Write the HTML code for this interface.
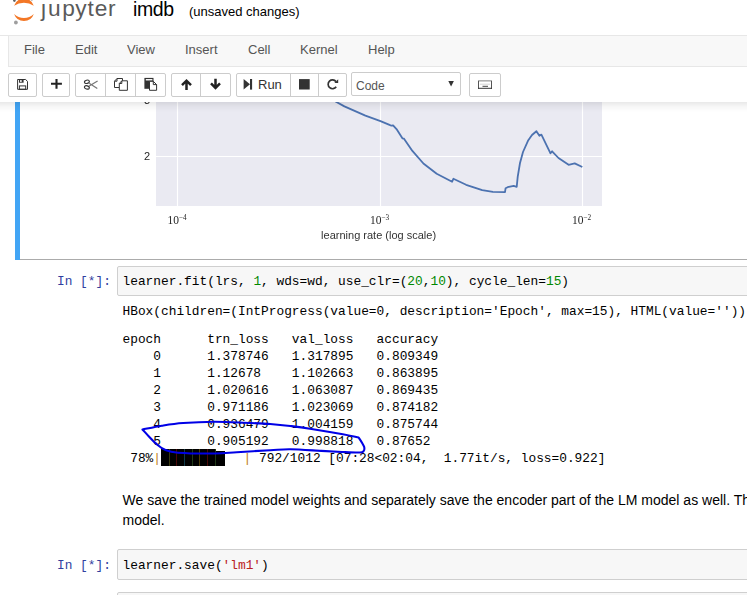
<!DOCTYPE html>
<html><head><meta charset="utf-8">
<style>
html,body{margin:0;padding:0;width:747px;height:595px;overflow:hidden;background:#fff;}
body{position:relative;font-family:"Liberation Sans",sans-serif;color:#000;}
.a{position:absolute;white-space:nowrap;}
.mono{font-family:"Liberation Mono",monospace;font-size:12.83px;}
#header{position:absolute;left:0;top:0;width:747px;height:102px;background:#fff;z-index:10;}
#shadow{position:absolute;left:0;top:102px;width:747px;height:10px;z-index:11;
  background:linear-gradient(to bottom,rgba(0,0,0,0.09),rgba(0,0,0,0.03) 50%,rgba(0,0,0,0));}
.menu{position:absolute;top:42px;font-size:13px;color:#555;line-height:15px;}
.btn{position:absolute;top:73px;height:22px;border:1px solid #ccc;border-radius:2px;background:#fff;box-sizing:content-box;}
.sep{position:absolute;top:73px;width:1px;height:24px;background:#ccc;}
.ico{position:absolute;}
.prompt{position:absolute;color:#303F9F;font-family:"Liberation Mono",monospace;font-size:12.83px;}
.inbox{position:absolute;left:117px;width:700px;background:#f7f7f7;border:1px solid #cfcfcf;border-radius:2px;}
.num{color:#080;}
.str{color:#BA2121;}
</style></head>
<body>
<div id="header">
  <!-- logo -->
  <svg class="ico" style="left:0;top:0" width="40" height="30" viewBox="0 0 40 30">
    <path d="M14.1 5.7A10.43 10.43 0 0 1 33.8 5.7A18.2 18.2 0 0 0 14.1 5.7Z" fill="#f37726"/>
    <path d="M14.1 14A10.43 10.43 0 0 0 33.8 14A14.4 14.4 0 0 1 14.1 14Z" fill="#f37726"/>
    <circle cx="15.9" cy="22.5" r="1.9" fill="#9e9e9e"/>
    <circle cx="14.4" cy="0.6" r="1.3" fill="#616262"/>
    <circle cx="31.8" cy="-0.2" r="1" fill="#9e9e9e"/>
  </svg>
  <div style="position:absolute;left:0;top:-5.3px;font-size:22.7px;line-height:26px;color:#5a5a5a;">
    <span class="a" style="left:41.1px">j</span><span class="a" style="left:48px">u</span><span class="a" style="left:62.2px">p</span><span class="a" style="left:75.2px">y</span><span class="a" style="left:87.6px">t</span><span class="a" style="left:94.8px">e</span><span class="a" style="left:107.9px">r</span>
  </div>
  <div style="position:absolute;left:39px;top:0;width:9px;height:3.2px;background:#fff"></div>
  <div class="a" style="left:133px;top:-1.8px;font-size:19.5px;line-height:22px;color:#000;letter-spacing:-0.4px">imdb</div>
  <div class="a" style="left:189px;top:3.5px;font-size:13px;line-height:15px;color:#000">(unsaved changes)</div>
  <!-- menubar -->
  <div style="position:absolute;left:0;top:35px;width:747px;height:1px;background:#e7e7e7"></div>
  <div style="position:absolute;left:8px;top:35px;width:760px;height:30px;background:#f8f8f8;border:1px solid #e7e7e7;"></div>
  <div class="menu" style="left:24px">File</div>
  <div class="menu" style="left:75px">Edit</div>
  <div class="menu" style="left:127px">View</div>
  <div class="menu" style="left:185px">Insert</div>
  <div class="menu" style="left:248px">Cell</div>
  <div class="menu" style="left:300px">Kernel</div>
  <div class="menu" style="left:368px">Help</div>
  <!-- toolbar -->
  <div class="btn" style="left:8px;width:27px"></div>
  <div class="btn" style="left:42px;width:26px"></div>
  <div class="btn" style="left:75px;width:89px"></div>
  <div class="sep" style="left:105px"></div><div class="sep" style="left:135px"></div>
  <div class="btn" style="left:171px;width:58px"></div>
  <div class="sep" style="left:200px"></div>
  <div class="btn" style="left:236px;width:109px"></div>
  <div class="sep" style="left:290px"></div><div class="sep" style="left:318px"></div>
  <div class="btn" style="left:351px;top:72px;width:108px;height:22px"></div>
  <div class="btn" style="left:469px;width:30px"></div>
  <div class="a" style="left:258px;top:77px;font-size:13px;line-height:15px;color:#333">Run</div>
  <div class="a" style="left:356px;top:79px;font-size:12px;line-height:14px;color:#555">Code</div>
  <svg class="ico" style="left:0;top:60px" width="520" height="40" viewBox="0 60 520 40">
    <!-- save -->
    <path d="M17.6 79.5h8l1.9 1.9v7.9h-9.9z" fill="none" stroke="#333" stroke-width="1"/>
    <rect x="19" y="79.5" width="4.6" height="3.2" fill="#333"/>
    <rect x="20.2" y="80" width="1.4" height="2" fill="#fff"/>
    <rect x="19.4" y="85.9" width="6.3" height="3.4" fill="none" stroke="#333" stroke-width="1"/>
    <!-- plus -->
    <path d="M56.5 79v9.7M51 83.7h10.9" stroke="#222" stroke-width="2.1"/>
    <!-- scissors -->
    <ellipse cx="86.9" cy="81.8" rx="2.5" ry="1.6" fill="none" stroke="#333" stroke-width="1.1" transform="rotate(-15 86.9 81.8)"/>
    <ellipse cx="86.9" cy="87.4" rx="2.5" ry="1.6" fill="none" stroke="#333" stroke-width="1.1" transform="rotate(15 86.9 87.4)"/>
    <path d="M89.2 83.2L97.3 88.4M89.2 86L97.6 80.9" stroke="#777" stroke-width="1.2"/>
    <!-- copy -->
    <path d="M117 78.5h5.5v2.5M117 78.5l-2.5 2.7v6.3h4.6M117 78.5v2.7h-2.5" fill="none" stroke="#333" stroke-width="1"/>
    <path d="M121.8 80.8h5.6v9.5h-8.1v-6.8z" fill="#fff" stroke="#333" stroke-width="1"/>
    <path d="M121.8 80.8v2.7h-2.5" fill="none" stroke="#333" stroke-width="1"/>
    <!-- paste -->
    <rect x="144.4" y="77.9" width="9.1" height="10.9" fill="#333"/>
    <rect x="145.8" y="79" width="6.6" height="1.5" fill="#f4f4f4"/>
    <path d="M149.5 81.3H153.3L156.6 84.6V90.3H149.5Z" fill="#fff" stroke="#333" stroke-width="1"/>
    <path d="M153.3 81.3V84.6H156.6" fill="none" stroke="#333" stroke-width="1"/>
    <!-- up -->
    <path d="M186.5 90v-9M182 85.2l4.5-4.5 4.5 4.5" fill="none" stroke="#222" stroke-width="2.5"/>
    <!-- down -->
    <path d="M215.5 78.8v9M211 83.4l4.5 4.5 4.5-4.5" fill="none" stroke="#222" stroke-width="2.5"/>
    <!-- step forward -->
    <path d="M243.6 79v10.6l6.4-5.3z" fill="#333"/><rect x="250" y="79" width="2.1" height="10.6" fill="#333"/>
    <!-- stop -->
    <rect x="299" y="79.1" width="10.7" height="10.4" fill="#333"/>
    <!-- refresh -->
    <path d="M336 81.6A4.4 4.4 0 1 0 336.2 86.8" fill="none" stroke="#333" stroke-width="1.7"/>
    <path d="M338.2 79.2v3.8h-3.8z" fill="#333"/>
    <!-- select arrow -->
    <path d="M448.3 80.9h5.6l-2.8 5.6z" fill="#333"/>
    <!-- keyboard -->
    <rect x="478" y="80" width="14" height="1.6" fill="#b0b0b0"/>
    <rect x="478" y="81" width="1" height="7.8" fill="#555"/>
    <rect x="491" y="81" width="1" height="7.8" fill="#555"/>
    <rect x="478" y="87.8" width="14" height="1" fill="#333"/>
    <path d="M480.5 84.2h9.5" stroke="#aaa" stroke-width="1" stroke-dasharray="1 1"/>
    <path d="M482.5 86.3h5.5" stroke="#444" stroke-width="1"/>
  </svg>
</div>
<div id="shadow"></div>

<!-- chart cell -->
<div style="position:absolute;left:15px;top:60px;width:5px;height:200px;background:#42A5F5"></div>
<div style="position:absolute;left:20px;top:259px;width:727px;height:1px;background:#ababab"></div>
<svg class="ico" style="left:0;top:0;will-change:transform" width="747" height="260" viewBox="0 0 747 260">
  <rect x="156" y="40" width="446" height="166" fill="#eaeaf2"/>
  <path d="M177.5 40V206M380.5 40V206M582.5 40V206M156 156.5H602M156 100H602" stroke="#fff" stroke-width="1.15"/>
  <path d="M322 92L336 101.7L344.4 106.4L365.4 115.6L380.5 121.2L388.9 124.6L391.4 125.7L393.1 125.4L396.5 129.1L402.4 138.3L404 138.7L412.4 150.9L423.4 163.5L436.7 173.8L452.1 181.7L453.4 178.8L466.1 184.8L482.2 190.2L492.9 191.8L505 192.2L505.6 188.2L507.6 187.2L513.7 185.9L516.7 186.8L517.7 176.8L520 163L523 152L528.3 140.2L532 135L536.4 131.2L539.4 135.8L541.4 134.6L550.5 153.3L552.1 151.3L558.5 158L568.6 164.8L574.7 163.4L582.3 167" fill="none" stroke="#4c72b0" stroke-width="1.8" stroke-linejoin="round"/>
  <text x="150" y="160.2" font-family="Liberation Sans" font-size="11" fill="#262626" text-anchor="end">2</text>
  <text x="150" y="103.7" font-family="Liberation Sans" font-size="11" fill="#262626" text-anchor="end">3</text>
  <g font-family="Liberation Serif" fill="#262626">
    <text x="167.5" y="224.2" font-size="11.5">10</text><text x="178.8" y="220" font-size="7.3">−4</text>
    <text x="370" y="224.2" font-size="11.5">10</text><text x="381.3" y="220" font-size="7.3">−3</text>
    <text x="572" y="224.2" font-size="11.5">10</text><text x="583.3" y="220" font-size="7.3">−2</text>
  </g>
  <text x="378.6" y="238.6" font-family="Liberation Sans" font-size="11" fill="#333" text-anchor="middle">learning rate (log scale)</text>
</svg>

<!-- code cell 2 -->
<div class="prompt" style="left:57px;top:274px;line-height:15px">In [*]:</div>
<div class="inbox" style="top:266px;height:28px"></div>
<div class="a mono" style="left:122.5px;top:274px;line-height:15px">learner.fit(lrs, <span class="num">1</span>, wds=wd, use_clr=(<span class="num">20</span>,<span class="num">10</span>), cycle_len=<span class="num">15</span>)</div>
<pre class="a mono" style="white-space:pre;margin:0;left:122.5px;top:303px;line-height:17px">HBox(children=(IntProgress(value=0, description='Epoch', max=15), HTML(value='')))</pre>
<pre class="a mono" style="white-space:pre;margin:0;left:122.5px;top:331px;line-height:17px">epoch      trn_loss   val_loss   accuracy
    0      1.378746   1.317895   0.809349
    1      1.12678    1.102663   0.863895
    2      1.020616   1.063087   0.869435
    3      0.971186   1.023069   0.874182
    4      0.936479   1.004159   0.875744
    5      0.905192   0.998818   0.87652 
 78%<span style="color:#c0801a">|</span></pre>
<div style="position:absolute;left:161px;top:449px;width:54px;height:17px;background:#000"></div>
<div style="position:absolute;left:214px;top:451px;width:11.2px;height:15px;background:#000"></div>
<div style="position:absolute;left:168.5px;top:449px;width:1px;height:17px;background:#3a3a10"></div>
<div style="position:absolute;left:176.2px;top:449px;width:1px;height:17px;background:#4a0808"></div>
<div style="position:absolute;left:183.9px;top:449px;width:1px;height:17px;background:#103a4a"></div>
<div style="position:absolute;left:191.6px;top:449px;width:1px;height:17px;background:#203a18"></div>
<div style="position:absolute;left:199.3px;top:449px;width:1px;height:17px;background:#4a3a08"></div>
<div style="position:absolute;left:207px;top:449px;width:1px;height:17px;background:#4a0808"></div>
<div style="position:absolute;left:214.5px;top:449px;width:1px;height:17px;background:#203a18"></div>
<pre class="a mono" style="white-space:pre;margin:0;left:243.6px;top:450px;line-height:17px;color:#c0801a">|</pre>
<pre class="a mono" style="white-space:pre;margin:0;left:259px;top:450px;line-height:17px">792/1012 [07:28&lt;02:04,  1.77it/s, loss=0.922]</pre>

<!-- markdown -->
<div class="a" style="left:122.5px;top:490px;font-size:14px;line-height:20px">We save the trained model weights and separately save the encoder part of the LM model as well. The<br>model.</div>

<!-- code cell 3 -->
<div class="prompt" style="left:57px;top:558px;line-height:15px">In [*]:</div>
<div class="inbox" style="top:549px;height:29px"></div>
<div class="a mono" style="left:122.5px;top:558px;line-height:15px">learner.save(<span class="str">'lm1'</span>)</div>
<div class="inbox" style="top:592px;height:29px"></div>

<!-- annotation -->
<svg class="ico" style="left:0;top:0" width="747" height="595" viewBox="0 0 747 595">
  <path d="M142.5 429.5C145.7 428.9 155.0 426.8 161.8 425.7C168.6 424.6 174.3 423.6 183.2 423.0C192.1 422.4 204.9 421.9 215.0 421.8C225.1 421.8 234.3 422.3 243.5 422.7C252.7 423.1 262.4 423.4 270.2 424.0C278.0 424.6 283.7 425.2 290.3 426.0C296.9 426.8 301.2 427.3 310.0 428.7C318.8 430.1 334.7 432.8 342.8 434.3C350.9 435.8 356.0 437.0 358.6 437.5C359.2 438.4 361.1 441.2 362.0 442.8C362.9 444.4 363.9 445.8 364.2 447.1C364.5 448.5 364.4 450.0 363.7 450.9C363.0 451.8 363.5 452.3 360.0 452.5C356.5 452.7 349.2 452.3 342.8 452.0C336.4 451.7 330.1 451.4 321.4 450.9C312.6 450.4 298.8 449.3 290.3 449.2C281.8 449.1 279.1 449.7 270.2 450.2C261.3 450.7 246.0 451.6 236.8 452.2C227.6 452.8 224.8 453.4 215.0 453.5C205.2 453.6 186.1 453.3 177.8 452.7C169.5 452.1 168.6 451.3 165.0 449.8C161.4 448.3 159.1 446.1 156.4 443.9C153.7 441.7 151.2 438.8 148.9 436.4C146.6 434.0 143.6 430.6 142.5 429.5" fill="none" stroke="#0000e6" stroke-width="2.1" stroke-linejoin="round" stroke-linecap="round"/>
</svg>
</body></html>
